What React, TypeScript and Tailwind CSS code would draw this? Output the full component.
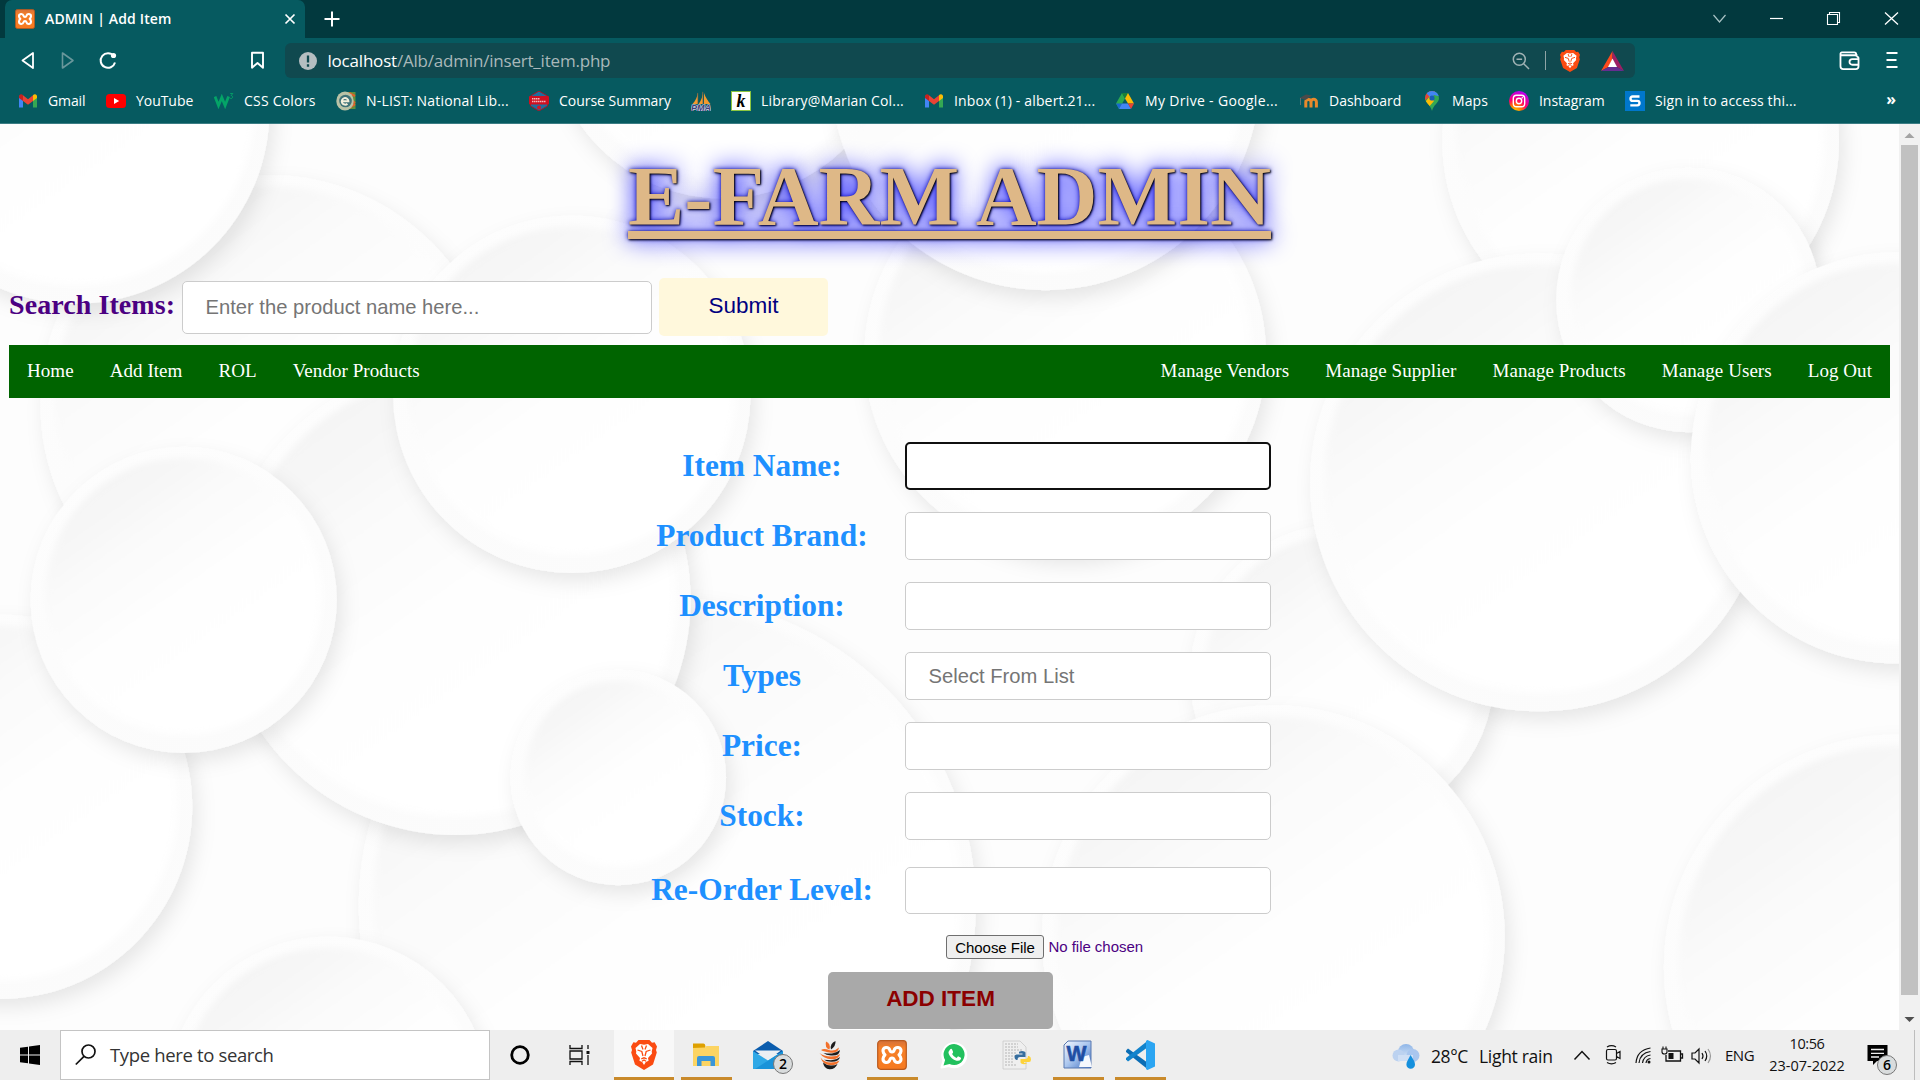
import React from "react";

/* ---------- page backdrop ---------- */

type Disc = [number, number, number];

const discs: Disc[] = [
  [545, 740, 252],
  [220, 330, 187],
  [372, 490, 192],
  [62, 90, 158],
  [590, 20, 142],
  [870, 290, 164],
  [467, 322, 146],
  [854, 62, 175],
  [0, 659, 157],
  [150, 490, 125],
  [505, 635, 88],
  [268, 897, 132],
  [1096, 552, 124],
  [1040, 765, 189],
  [1340, 115, 162],
  [1257, 394, 187],
  [1379, 245, 108],
  [1549, 374, 168],
  [1549, 790, 190],
];

function Backdrop() {
  return (
    <svg className="absolute inset-0 h-full w-full" viewBox="0 101.3 1551 740" preserveAspectRatio="none">
      <defs>
        <linearGradient id="face" x1="0.15" y1="0.05" x2="0.75" y2="0.9">
          <stop offset="0" stopColor="#f3f3f3" />
          <stop offset="0.35" stopColor="#fbfbfb" />
          <stop offset="0.55" stopColor="#fefefe" />
          <stop offset="1" stopColor="#ffffff" />
        </linearGradient>
        <linearGradient id="rim" x1="0.2" y1="0" x2="0.7" y2="1">
          <stop offset="0" stopColor="#fdfdfd" />
          <stop offset="1" stopColor="#fbfbfb" />
        </linearGradient>
        <filter id="drop" x="-20%" y="-20%" width="140%" height="140%">
          <feDropShadow dx="4" dy="7" stdDeviation="8" floodColor="#000" floodOpacity="0.09" />
        </filter>
        <filter id="soft" x="-5%" y="-5%" width="110%" height="110%">
          <feGaussianBlur stdDeviation="2.5" />
        </filter>
      </defs>
      <rect x="0" y="100" width="1551" height="745" fill="#fdfdfd" />
      {discs.map(([x, y, r]) => (
        <g key={`${x}-${y}`}>
          <circle cx={x} cy={y} r={r} fill="url(#rim)" filter="url(#drop)" />
          <circle cx={x} cy={y - 3} r={r - 12} fill="url(#face)" filter="url(#soft)" />
        </g>
      ))}
    </svg>
  );
}

/* ---------- icons ---------- */

function XamppTile({ size }: { size: number }) {
  return (
    <svg width={size} height={size} viewBox="0 0 30 30">
      <defs>
        <linearGradient id="xa" x1="0" y1="0" x2="0" y2="1">
          <stop offset="0" stopColor="#d4713a" />
          <stop offset="0.25" stopColor="#f5802a" />
          <stop offset="1" stopColor="#f77a1f" />
        </linearGradient>
      </defs>
      <rect x="0.7" y="0.7" width="28.6" height="28.6" rx="3" fill="url(#xa)" stroke="#b9591d" strokeWidth="1.2" />
      <path
        d="M15 12q-1.700 0-2.200-1.900Q12 7.300 9 7.500 5.800 8 6 11q.2 2.200 2 3.800-1.800 1.700-2 4-.1 3.200 3 3.700 3 .2 3.800-2.600.5-1.900 2.200-1.900t2.200 1.900q.8 2.800 3.800 2.600 3.100-.5 3-3.700-.2-2.300-2-4 1.800-1.600 2-3.800.2-3-3-3.500-3-.2-3.800 2.600Q16.700 12 15 12z"
        fill="none"
        stroke="#fff"
        strokeWidth="3.100"
        strokeLinejoin="round"
      />
    </svg>
  );
}

const GmailIcon = () => (
  <svg width="20" height="20" viewBox="0 0 20 20">
    <path d="M1 4.500V16.500h4V8z" fill="#4285f4" />
    <path d="M19 4.500V16.500h-4V8z" fill="#34a853" />
    <path d="M1 5.200a2 2 0 0 1 3.200-1.600L5 4.300V10L1 7z" fill="#c5221f" />
    <path d="M19 5.200a2 2 0 0 0-3.200-1.600L15 4.300V10l4-3z" fill="#fbbc04" />
    <path d="M5 4.300l5 3.900 5-3.900V10l-5 3.800L5 10z" fill="#ea4335" />
  </svg>
);

const YouTubeIcon = () => (
  <svg width="20" height="20" viewBox="0 0 20 20">
    <rect y="3" width="20" height="14" rx="3.500" fill="#f00" />
    <path d="M8 7v6l5.200-3z" fill="#fff" />
  </svg>
);

const W3Icon = () => (
  <svg width="20" height="20" viewBox="0 0 20 20">
    <path d="M1 5.500l3.500 9 3.300-8 3.300 8 3.500-9" fill="none" stroke="#04a467" strokeWidth="2.800" />
    <path d="M16.200 2.500h2.600l-1.600 2a1.500 1.500 0 1 1-1.300 2.400" fill="none" stroke="#04a467" strokeWidth="0.900" />
  </svg>
);

const NListIcon = () => (
  <svg width="20" height="20" viewBox="0 0 20 20">
    <rect x="11" y="1" width="8.500" height="17" fill="#5f8f3c" />
    <path d="M13 2l6 3M14 8l5 4M13 17l6-4" stroke="#e0602a" strokeWidth="2.200" />
    <ellipse cx="9" cy="10" rx="8.700" ry="9.500" fill="#b9c2a6" />
    <circle cx="9.500" cy="10" r="6.300" fill="#3f7278" />
    <path d="M6 10.300h6.400a3.300 3.300 0 1 0-1 2.400" fill="none" stroke="#f3efdc" strokeWidth="2" />
  </svg>
);

const AcademyIcon = () => (
  <svg width="20" height="20" viewBox="0 0 20 20">
    <path d="M10 0l8.500 5v10L10 20l-8.500-5V5z" fill="#1d6f9f" stroke="#a81622" strokeWidth="1" />
    <rect x="0" y="5" width="20" height="8.500" rx="1" fill="#cf1020" />
    <path d="M3 7.800h8M3 10.500h14" stroke="#f2b9bd" strokeWidth="1.400" strokeDasharray="1.500 0.500" />
    <circle cx="10" cy="16.500" r="2" fill="#d31525" />
  </svg>
);

const PmaIcon = () => (
  <svg width="20" height="20" viewBox="0 0 20 20">
    <path d="M7 1.500V13H1.500C4.500 10 6.300 6 7 1.500zM12 0v13H7.700C10.500 9 11.700 5 12 0zM13 2c1.500 4.500 4 8 6.500 11H13z" fill="#f29a2e" />
    <path d="M6.700 2v11M11.800 1v12" stroke="#8a6b4b" strokeWidth="0.700" />
    <text x="0" y="19.500" textLength="20" lengthAdjust="spacingAndGlyphs" fontSize="8.500" fontWeight="700" fontStyle="italic" fontFamily="Liberation Sans, sans-serif" fill="#3e3f78" stroke="#d5d6e8" strokeWidth="1.200" paintOrder="stroke">PMA</text>
  </svg>
);

const KohaIcon = () => (
  <span className="flex h-5 w-5 items-center justify-center border-[1.500px] border-[#8cc63f] bg-white font-['Liberation_Serif',serif] text-[18px] leading-none font-bold text-black italic">
    k
  </span>
);

const DriveIcon = () => (
  <svg width="20" height="20" viewBox="0 0 20 20">
    <path d="M7 2L1 12.500 4 18 10 7.400z" fill="#2da94f" />
    <path d="M7 2h6l-3 5.400z" fill="#188038" />
    <path d="M13 2l6 10.500h-6L10 7.400z" fill="#fbbc04" />
    <path d="M1 12.500h6L4 18z" fill="#1967d2" />
    <path d="M7 12.500h6L16 18H4z" fill="#4285f4" />
    <path d="M13 12.500h6L16 18z" fill="#ea4335" />
  </svg>
);

const MoodleIcon = () => (
  <svg width="20" height="20" viewBox="0 0 20 20">
    <path d="M6.800 16.500v-5.500a2.500 2.500 0 0 1 5.200 0v5.500m0-5.500a2.500 2.500 0 0 1 5.400 0v5.500" fill="none" stroke="#e8892b" strokeWidth="3" />
    <path d="M0.500 7L7 3.500l6 1L6.500 9z" fill="#4a4a4a" />
    <path d="M1.500 7v7" stroke="#777" strokeWidth="0.800" />
  </svg>
);

const MapsIcon = () => (
  <svg width="20" height="20" viewBox="0 0 20 20">
    <defs>
      <clipPath id="pin">
        <path d="M10 0a7 7 0 0 1 7 7c0 5-5.500 6.500-7 13C8.500 13.500 3 12 3 7a7 7 0 0 1 7-7z" />
      </clipPath>
    </defs>
    <g clipPath="url(#pin)">
      <rect width="20" height="20" fill="#34a853" />
      <path d="M0 12L14 0H0z" fill="#ea4335" />
      <path d="M5 0h15v6L12 4 9 7 5 3z" fill="#4285f4" />
      <path d="M2 12.500L8 5l4 5-6 7z" fill="#fbbc04" />
    </g>
    <circle cx="10" cy="7" r="2.600" fill="#1a5fb4" />
  </svg>
);

const InstagramIcon = () => (
  <svg width="20" height="20" viewBox="0 0 20 20">
    <defs>
      <radialGradient id="ig" cx="0.3" cy="1.05" r="1.100">
        <stop offset="0" stopColor="#ffd600" />
        <stop offset="0.3" stopColor="#ff7a00" />
        <stop offset="0.550" stopColor="#ff0169" />
        <stop offset="1" stopColor="#b400ff" />
      </radialGradient>
    </defs>
    <circle cx="10" cy="10" r="10" fill="url(#ig)" />
    <rect x="4.300" y="4.300" width="11.400" height="11.400" rx="3.300" fill="none" stroke="#fff" strokeWidth="1.400" />
    <circle cx="10" cy="10" r="2.700" fill="none" stroke="#fff" strokeWidth="1.400" />
    <circle cx="13.300" cy="6.800" r="0.800" fill="#fff" />
  </svg>
);

const SIcon = () => (
  <svg width="20" height="20" viewBox="0 0 20 20">
    <rect width="20" height="20" fill="#0077cc" />
    <path d="M14.500 5.500H7.700Q5.500 5.500 5.500 7.700T7.700 9.900h4.600q2.200 0 2.200 2.200t-2.200 2.300H5.300" fill="none" stroke="#fff" strokeWidth="2.400" />
  </svg>
);

function BraveLion({ className }: { className: string }) {
  return (
    <svg className={className} viewBox="0 0 26 30" preserveAspectRatio="none">
      <path d="M7.500 0h11l2.500 2.700 2.600-.4L26 6.500 25 10l.8 2.500-3.800 12L13 30 4 24.500.2 12.500 1 10 0 6.500l2.400-4.200 2.600.4z" fill="#fb4b12" />
      <path
        d="M13 4.800l4-.8 4.500 4-.8 3.500.3 2-4 4.500.6 2.700-2.800 1.300L13 25l-1.800-3-2.800-1.300.6-2.700-4-4.500.3-2L4.500 8 9 4z"
        fill="#fff"
      />
      <path
        d="M6.500 10l4.300 1.500L12 16M19.500 10l-4.300 1.500L14 16M10.500 5.500l1.500 4M15.500 5.500l-1.500 4M10.300 18.800l2.700-1 2.700 1M11 21.200l2-1.200 2 1.200"
        fill="none"
        stroke="#fb4b12"
        strokeWidth="1.300"
      />
    </svg>
  );
}

/* ---------- browser chrome ---------- */

const bookmarks: { width: string; label: string; track: string; icon: React.ReactNode }[] = [
  { width: "w-[88px]", label: "Gmail", track: "tracking-[-0.1px]", icon: <GmailIcon /> },
  { width: "w-[108px]", label: "YouTube", track: "tracking-[-0.05px]", icon: <YouTubeIcon /> },
  { width: "w-[122px]", label: "CSS Colors", track: "tracking-[0.22px]", icon: <W3Icon /> },
  { width: "w-[193px]", label: "N-LIST: National Lib...", track: "tracking-[0.2px]", icon: <NListIcon /> },
  { width: "w-[162px]", label: "Course Summary", track: "tracking-[-0.03px]", icon: <AcademyIcon /> },
  { width: "w-[40px]", label: "", track: "", icon: <PmaIcon /> },
  { width: "w-[193px]", label: "Library@Marian Col...", track: "tracking-[0.15px]", icon: <KohaIcon /> },
  { width: "w-[191px]", label: "Inbox (1) - albert.21...", track: "tracking-[0.15px]", icon: <GmailIcon /> },
  { width: "w-[184px]", label: "My Drive - Google...", track: "tracking-[0.33px]", icon: <DriveIcon /> },
  { width: "w-[123px]", label: "Dashboard", track: "tracking-[0px]", icon: <MoodleIcon /> },
  { width: "w-[87px]", label: "Maps", track: "tracking-[0.1px]", icon: <MapsIcon /> },
  { width: "w-[116px]", label: "Instagram", track: "tracking-[-0.05px]", icon: <InstagramIcon /> },
  { width: "w-[180px]", label: "Sign in to access thi...", track: "tracking-[0.15px]", icon: <SIcon /> },
];

function BrowserChrome() {
  return (
    <header className="flex h-[124px] shrink-0 flex-col border-b border-[#3b7d84] bg-[#065a60] text-white">
      <div className="flex h-[38px] items-stretch bg-[#02393e]">
        <div className="ml-[5px] flex w-[300px] items-center rounded-t-[7px] bg-[#065a60] pl-[10px]">
          <XamppTile size={20} />
          <span className="ml-[10px] grow pb-[1px] text-[14px] font-semibold tracking-[0.15px] whitespace-nowrap">ADMIN | Add Item</span>
          <svg className="mr-[9px]" width="12" height="12" viewBox="0 0 12 12">
            <path d="M1.500 1.500l9 9m0-9l-9 9" stroke="#fff" strokeWidth="1.700" />
          </svg>
        </div>
        <svg className="mt-[11px] ml-[19px]" width="16" height="16" viewBox="0 0 16 16">
          <path d="M8 0.500v15M0.500 8h15" stroke="#fff" strokeWidth="2" />
        </svg>
        <div className="grow" />
        <svg className="mt-[10px]" width="220" height="18" viewBox="0 0 220 18">
          <path d="M13.500 5l6 7 6-7" fill="none" stroke="#a9c3c5" strokeWidth="1.200" />
          <path d="M70 8.500h13" stroke="#fff" strokeWidth="1.200" />
          <path d="M127.500 4.500h10v10h-10zM129.500 4.500v-2h10v10h-2" fill="none" stroke="#fff" strokeWidth="1.100" />
          <path d="M185 2.500l13 12m0-12l-13 12" stroke="#fff" strokeWidth="1.300" />
        </svg>
      </div>
      <div className="flex h-[45px] shrink-0 items-center">
        <svg width="285" height="45" viewBox="0 0 285 45" fill="none">
          <path d="M33 15v15L22.500 22.500z" stroke="#fff" strokeWidth="1.800" strokeLinejoin="round" />
          <path d="M62.500 15v15L73 22.500z" stroke="#69979b" strokeWidth="1.600" strokeLinejoin="round" />
          <path d="M113.700 18a7.300 7.300 0 1 0 1.300 6.500" stroke="#fff" strokeWidth="2" />
          <circle cx="113.500" cy="17.500" r="2.600" fill="#fff" />
          <path d="M252 14.700h11v15l-5.500-4.700-5.500 4.700z" stroke="#fff" strokeWidth="1.900" strokeLinejoin="round" />
        </svg>
        <div className="flex h-[35px] w-[1350px] items-center rounded-[6px] bg-[#10494f]">
          <svg className="ml-[13.500px]" width="18" height="18" viewBox="0 0 18 18">
            <circle cx="9" cy="9" r="9" fill="#b5bec1" />
            <path d="M9 3.500v7M9 12.300v2.400" stroke="#10494f" strokeWidth="2.300" />
          </svg>
          <span className="ml-[11px] grow text-[17px] tracking-[-0.2px] whitespace-nowrap text-[#a9b8ba]">
            <span className="text-white">localhost</span>/Alb/admin/insert_item.php
          </span>
          <svg className="mr-[15px]" width="18" height="18" viewBox="0 0 18 18" fill="none" stroke="#9fb2b4" strokeWidth="1.500">
            <circle cx="7.300" cy="7.300" r="6" />
            <path d="M4.500 7.300h5.600M11.700 11.700l5.300 5.300" />
          </svg>
          <span className="h-[19px] w-px bg-[#8fa4a6]" />
          <BraveLion className="ml-[14px] h-[22px] w-[20px]" />
          <svg className="mr-[11px] ml-[21px]" width="23" height="20" viewBox="0 0 23 20">
            <path d="M11.500 0L0 20l7.500-4 4-8z" fill="#ff4a1d" />
            <path d="M11.500 0L23 20l-7.500-4-4-8z" fill="#9e1f63" />
            <path d="M0 20h23l-7.500-4h-8z" fill="#662d91" />
            <path d="M11.500 7.500L16 16H7z" fill="#fff" />
          </svg>
        </div>
        <div className="grow" />
        <svg className="mr-[26px]" width="21" height="19" viewBox="0 0 21 20" fill="none" stroke="#fff" strokeWidth="1.900">
          <path d="M18 6V4.500H2.500A1.500 1.500 0 0 1 2.500 1.500H15.500a2 2 0 0 1 2 2M1 3v13a3 3 0 0 0 3 3h13a3 3 0 0 0 3-3V8a2 2 0 0 0-2-2" />
          <path d="M20 8.500h-6.500a2.700 2.700 0 0 0 0 6H20" />
        </svg>
        <svg className="mr-[22px] mb-[1px]" width="12" height="18" viewBox="0 0 12 18">
          <path d="M0.500 2h11M0.500 9h10M0.500 16h11" stroke="#fff" strokeWidth="2" />
        </svg>
      </div>
      <nav className="flex h-[36px] items-center pl-[18px] text-[14px]">
        {bookmarks.map((b, i) => (
          <div key={i} className={`flex shrink-0 items-center gap-[10px] ${b.width}`}>
            <span className="shrink-0">{b.icon}</span>
            {b.label && <span className={`pb-[2px] whitespace-nowrap ${b.track}`}>{b.label}</span>}
          </div>
        ))}
        <span className="ml-auto pr-[24px] pb-[5px] text-[16px] font-bold">»</span>
      </nav>
    </header>
  );
}

/* ---------- web page ---------- */

const leftLinks = ["Home", "Add Item", "ROL", "Vendor Products"];
const rightLinks = ["Manage Vendors", "Manage Supplier", "Manage Products", "Manage Users", "Log Out"];
const fields = [
  { label: "Item Name:", hint: "", box: "h-12 border-2 border-[#101010]", gap: "mb-[22px]", lead: "leading-[46px]" },
  { label: "Product Brand:", hint: "", box: "h-12 border border-[#ccc]", gap: "mb-[22px]", lead: "leading-[46px]" },
  { label: "Description:", hint: "", box: "h-12 border border-[#ccc]", gap: "mb-[22px]", lead: "leading-[46px]" },
  { label: "Types", hint: "Select From List", box: "h-12 border border-[#ccc]", gap: "mb-[22px]", lead: "leading-[46px]" },
  { label: "Price:", hint: "", box: "h-12 border border-[#ccc]", gap: "mb-[22px]", lead: "leading-[46px]" },
  { label: "Stock:", hint: "", box: "h-12 border border-[#ccc]", gap: "mb-[27px]", lead: "leading-[46px]" },
  { label: "Re-Order Level:", hint: "", box: "h-[47px] border border-[#ccc]", gap: "mb-[21px]", lead: "leading-[44px] pb-[2px]" },
];

function NavLinks({ links }: { links: string[] }) {
  return (
    <div className="flex">
      {links.map((l) => (
        <a key={l} className="px-[18px]">
          {l}
        </a>
      ))}
    </div>
  );
}

function Page() {
  return (
    <main className="relative flex grow overflow-hidden bg-white">
      <div className="relative h-full w-[1899px] overflow-hidden">
        <Backdrop />
        <div className="relative flex h-full flex-col font-['Liberation_Serif',serif]">
          <h1 className="h-[154px] pt-[25px] text-center text-[84.400px] leading-[96px] font-bold text-[#deb887] underline decoration-[8px] underline-offset-[6px] [text-decoration-skip-ink:none] [text-shadow:1px_1px_2px_black,0_0_25px_blue,0_0_5px_darkblue]">
            E-FARM ADMIN
          </h1>
          <div className="flex h-[58px] pl-[9px]">
            <label className="w-[173px] text-[28px] leading-[54px] font-bold tracking-[0.07px] whitespace-nowrap text-[#4b0082]">Search Items:</label>
            <div className="mt-[3px] h-[53px] w-[470px] rounded-[5px] border border-[#ccc] bg-white pl-[22.500px] font-['Liberation_Sans',sans-serif] text-[20.200px] leading-[51px] text-[#757575]">
              Enter the product name here...
            </div>
            <div className="ml-[7px] h-[58px] w-[169px] rounded-[5px] bg-[#fff8dc] text-center font-['Liberation_Sans',sans-serif] text-[22.500px] leading-[56px] text-[#000080]">
              Submit
            </div>
          </div>
          <nav className="mt-[9px] mr-[9px] ml-[9px] flex h-[53px] shrink-0 justify-between bg-[#006400] text-[19px] leading-[52px] tracking-[0.06px] text-white">
            <NavLinks links={leftLinks} />
            <NavLinks links={rightLinks} />
          </nav>
          <form className="mt-[44px] flex flex-col">
            {fields.map((f) => (
              <div key={f.label} className={`flex items-center ${f.gap}`}>
                <label className={`ml-[640px] w-[265px] pr-[21px] text-center text-[31.400px] font-bold text-[#1e90ff] ${f.lead}`}>{f.label}</label>
                <div className={`flex w-[366px] items-center rounded-[5px] bg-white pl-[22.500px] font-['Liberation_Sans',sans-serif] text-[20.200px] text-[#757575] ${f.box}`}>
                  {f.hint}
                </div>
              </div>
            ))}
            <div className="ml-[946px] flex h-[24px] font-['Liberation_Sans',sans-serif] text-[15px]">
              <span className="h-[24px] w-[98px] rounded-[3px] border border-[#6f6f6f] bg-[#efefef] text-center leading-[23px] tracking-[-0.04px] whitespace-nowrap text-black">
                Choose File
              </span>
              <span className="ml-[4.500px] leading-[23px] tracking-[-0.04px] text-[#4b0082]">No file chosen</span>
            </div>
            <div className="mt-[13px] ml-[828px] h-[57px] w-[225px] rounded-[5px] bg-[#a9a9a9] text-center font-['Liberation_Sans',sans-serif] text-[22.500px] leading-[54px] font-bold text-[#8b0000]">
              ADD ITEM
            </div>
          </form>
        </div>
      </div>
      <div className="flex w-[21px] flex-col items-center bg-[#f1f1f1]">
        <svg className="mt-[9px] mb-[7px]" width="11" height="5" viewBox="0 0 11 5">
          <path d="M5.500 0l5 5h-10z" fill="#a3a3a3" />
        </svg>
        <div className="h-[850px] w-[17px] bg-[#c1c1c1]" />
        <svg className="mt-[22px]" width="11" height="5" viewBox="0 0 11 5">
          <path d="M5.500 5l5-5h-10z" fill="#505050" />
        </svg>
      </div>
    </main>
  );
}

/* ---------- taskbar ---------- */

function Badge({ n, place }: { n: string; place: string }) {
  return (
    <span className={`absolute flex h-5 w-5 items-center justify-center rounded-full border border-[#777] bg-[#d9dcdd] text-[14px] leading-none font-semibold text-black ${place}`}>
      {n}
    </span>
  );
}

const FolderIcon = () => (
  <svg width="28" height="30" viewBox="0 0 28 30">
    <path d="M1 4h11l2 2.500H1z" fill="#dea514" />
    <path d="M1 3.500h10.500q1.500 0 1.500 1.500v3H1z" fill="#dea000" />
    <path d="M1 8l12-.5L14.500 6H27v20H1z" fill="#fcd462" />
    <path d="M5 26V18q0-2 2-2h14q2 0 2 2v8h-4.500v-5h-9v5z" fill="#3a96d8" />
  </svg>
);

const MailIcon = () => (
  <svg width="30" height="30" viewBox="0 0 30 30">
    <path d="M0 11L15 1l15 10v3H0z" fill="#0a5cad" />
    <path d="M2 10.500h26L15 20z" fill="#eceff3" />
    <path d="M0 11l15 9.500L30 11v18H0z" fill="#2fa8e6" />
    <path d="M30 11v18H2z" fill="#1a93d9" />
  </svg>
);

const BeeIcon = () => (
  <svg width="24" height="30" viewBox="0 0 24 30" fill="none">
    <path d="M8 1.500q5 2 3.500 8-5-1.500-3.500-8z" fill="#f2702a" />
    <path d="M17.500 1q.5 5-4.500 8.500q-1.500-6 4.500-8.500z" fill="#1c1c1c" />
    <path d="M3 10q3-2 8 0t10-2.500q-1 6-8 5.200T3 10z" fill="#f2702a" />
    <path d="M21.800 10q.5 6-8.800 5.500-5-.5-7.500-2.500 6.500.9 9.500.3 4-.8 6.800-3.300z" fill="#1c1c1c" />
    <path d="M1.500 13q4 3.300 11.500 3.500 6 0 9-2.500-1 5.500-8.500 5.300T1.500 13z" fill="#f2702a" />
    <path d="M22 17q-1 5-9 4.700-4.500-.2-7-2 5.500.6 8.500.4 4.500-.4 7.500-3.100z" fill="#1c1c1c" />
    <path d="M2.500 17.500q3.500 5 10.500 5 5 0 8.500-2-2 4.800-8.500 4.800-8 0-10.500-7.800z" fill="#f2702a" />
    <path d="M5 22.500q3.500 3 8 3 4 0 6.500-1.500-2.500 5.500-8 5.300T5 22.500z" fill="#1c1c1c" />
  </svg>
);

const PythonFileIcon = () => (
  <svg width="30" height="30" viewBox="0 0 30 30">
    <path d="M2 1h17l6 6v22H2z" fill="#efefef" stroke="#c9c9c9" strokeWidth="0.800" />
    <path d="M4 4h13M4 7h13M4 10h18M4 13h12M4 16h10M4 19h9M4 22h9M4 25h12" stroke="#b5b5b5" strokeWidth="1.200" strokeDasharray="2 1" />
    <path d="M18 12.500q0-1.500 3-1.500t3.500 1.500V17h-5.500q-2.500 0-2.500 3h-1q-2-.5-2-3t2-2.500h6v-1H18z" fill="#366e9f" />
    <path d="M26 22.500q0 1.700-3 1.700t-3.500-1.700V19h5.500q2-.5 2-3h1q2 .5 2 3.500 0 2.500-2 2.500h-5v.8h3z" fill="#fdd33b" />
  </svg>
);

const WordIcon = () => (
  <svg width="30" height="30" viewBox="0 0 30 30">
    <defs>
      <linearGradient id="wd" x1="0" y1="0" x2="1" y2="1">
        <stop offset="0" stopColor="#f5f9ff" />
        <stop offset="0.500" stopColor="#a9c5ee" />
        <stop offset="1" stopColor="#3f6fc0" />
      </linearGradient>
    </defs>
    <path d="M5 1h23v27H1V5z" fill="url(#wd)" stroke="#5878b0" />
    <path d="M19 17l7-2 3 12H16z" fill="#f5f8fd" />
    <text x="3.500" y="20.500" textLength="20" lengthAdjust="spacingAndGlyphs" fontFamily="Liberation Sans, sans-serif" fontWeight="700" fontSize="22" fill="#1f4ea3" stroke="#1f4ea3" strokeWidth="0.600">W</text>
  </svg>
);

const CodeIcon = () => (
  <svg width="31" height="30" viewBox="0 0 31 30">
    <path d="M1 10.500l2-2L23 23v6.500L1 12z" fill="#0b6db5" />
    <path d="M1 19.500l2 2L23 7V0.500L1 18z" fill="#1283cc" />
    <path d="M22.500 0L30 3.500v23L22.500 30q-1-.3-1.500-1V1q.5-.700 1.500-1z" fill="#2ba5f2" />
  </svg>
);

const WhatsIcon = () => (
  <svg width="28" height="28" viewBox="0 0 28 28">
    <path d="M1.500 26.500l2-7A12 12 0 1 1 9 25z" fill="#fff" stroke="#fff" strokeWidth="2" strokeLinejoin="round" />
    <path d="M3.500 24.500l1.600-5.500A10.500 10.500 0 1 1 9.500 23z" fill="#22c15e" />
    <path d="M10 8.500q1.500-1.500 2.300.5l.8 2q.2.700-1 2 1.300 2.600 4.300 4 .5-.2 1.600-1.800l2.600 1.200q.9.500.2 1.800-1.300 2.200-4.300 1.500-5.500-1.500-7.700-6.700-.7-2.700 1.200-4.500z" fill="#fff" />
  </svg>
);

const apps: { icon: React.ReactNode; bar: string; tile: string; badge?: string }[] = [
  { icon: <BraveLion className="h-[30px] w-[26px]" />, bar: "w-[60px] bg-[#c98a2b]", tile: "bg-[#f8f8f8]" },
  { icon: <FolderIcon />, bar: "w-[51px] bg-[#c98a2b]", tile: "" },
  { icon: <MailIcon />, bar: "", tile: "", badge: "2" },
  { icon: <BeeIcon />, bar: "", tile: "" },
  { icon: <XamppTile size={30} />, bar: "w-[51px] bg-[#c98a2b]", tile: "" },
  { icon: <WhatsIcon />, bar: "", tile: "" },
  { icon: <PythonFileIcon />, bar: "", tile: "" },
  { icon: <WordIcon />, bar: "w-[51px] bg-[#c98a2b]", tile: "" },
  { icon: <CodeIcon />, bar: "w-[51px] bg-[#c98a2b]", tile: "" },
];

function Taskbar() {
  return (
    <footer className="flex h-[50px] shrink-0 bg-[#eeeeee] text-[#111]">
      <svg className="mt-[15px] ml-[20px]" width="20" height="20" viewBox="0 0 20 20">
        <path d="M0 2.800L8 1.700V9.500H0zM9 1.500L20 0v9.500H9zM0 10.500h8v7.800L0 17.200zM9 10.500h11V20L9 18.500z" fill="#000" />
      </svg>
      <div className="ml-[20px] flex w-[430px] items-center border border-[#c4c4c4] bg-white">
        <svg className="ml-[14px]" width="21" height="22" viewBox="0 0 21 22" fill="none" stroke="#111" strokeWidth="1.700">
          <circle cx="13.500" cy="7.500" r="6.500" />
          <path d="M9 12.300L0.800 20.500" />
        </svg>
        <span className="ml-[14px] text-[18.500px] tracking-[-0.35px] text-[#333]">Type here to search</span>
      </div>
      <svg className="mt-[15px] ml-[20px]" width="20" height="20" viewBox="0 0 20 20">
        <circle cx="10" cy="10" r="8.300" fill="none" stroke="#000" strokeWidth="2.800" />
      </svg>
      <svg className="mt-[15px] ml-[39px]" width="21" height="20" viewBox="0 0 21 20" fill="none" stroke="#111" strokeWidth="1.300">
        <path d="M1 0v3.500h12V0M1 20v-3.500h12V20M1 6h12v8H1zM19 0v4M19 10v10" />
        <path d="M17.500 7.500h3" strokeWidth="3" />
      </svg>
      <div className="ml-[23px] flex">
        {apps.map((a, i) => (
          <div key={i} className="relative flex w-[62px] items-center justify-center">
            <div className={`flex h-full w-[60px] flex-col items-center ${a.tile}`}>
              <div className="flex h-[47px] items-center pt-[2px]">{a.icon}</div>
              <div className={`h-[3px] ${a.bar}`} />
            </div>
            {a.badge && <Badge n={a.badge} place="top-[24px] left-[36px]" />}
          </div>
        ))}
      </div>
      <div className="grow" />
      <svg className="mt-[13px]" width="28" height="27" viewBox="0 0 28 27">
        <defs>
          <linearGradient id="cl" x1="0" y1="0" x2="0" y2="1">
            <stop offset="0" stopColor="#8fb6e8" />
            <stop offset="1" stopColor="#dfeaf8" />
          </linearGradient>
        </defs>
        <circle cx="14" cy="9" r="8" fill="url(#cl)" />
        <circle cx="6.500" cy="12.500" r="6" fill="#bcd2f0" />
        <circle cx="21" cy="12.500" r="6.500" fill="#a9c6ee" />
        <path d="M6 12h15v6H6z" fill="#cfdff5" />
        <path d="M18.500 12c2.500 4 4.500 6.500 4.500 9.500a4.300 4.300 0 0 1-8.600 0c0-3 2.300-5.500 4.100-9.500z" fill="#1590dd" />
      </svg>
      <span className="ml-[11px] w-[48px] text-[17.500px] leading-[52px] tracking-[-0.4px] whitespace-nowrap">28°C</span>
      <span className="w-[93px] text-[17.500px] leading-[52px] tracking-[-0.3px] whitespace-nowrap">Light rain</span>
      <svg className="mt-[14px]" width="142" height="24" viewBox="0 0 142 24" fill="none" stroke="#111" strokeWidth="1.500">
        <path d="M2.500 15.500l7.500-8 7.500 8" />
        <path d="M36 5.500h7q1.500 0 1.500 1.500v7.500q0 1.500-1.500 1.500h-7q-1.500 0-1.500-1.500V7q0-1.500 1.500-1.500zM44.500 9.500l3.500-2v7l-3.500-2M35 3q4.500-2.700 9 0M35 18.500q4.500 2.700 9 0" strokeWidth="1.200" />
        <path d="M64 19q1-13 14.500-15M67 19q1-10 11.500-11.500M70.500 19q1-7 8-8M74 19q.5-4 4.500-4.500" strokeWidth="1.200" />
        <circle cx="77" cy="18" r="1.500" fill="#111" stroke="none" />
        <path d="M96 7h12.500v10H94v-6M108.500 10h2v4h-2" strokeWidth="1.300" />
        <rect x="96.500" y="9" width="5" height="6" fill="#111" stroke="none" />
        <path d="M90 5h5v3q0 2-2.500 2T90 8zM91 5V2.500M94 5V2.500" strokeWidth="1.100" />
        <path d="M120 9h3l4-4v14l-4-4h-3zM130 9q2 3 0 6M133 7q3.500 5 0 10" strokeWidth="1.200" />
        <path d="M136 5q5 7 0 14" stroke="#999" strokeWidth="1.200" />
      </svg>
      <span className="ml-[11px] w-[42px] text-[15px] leading-[51px] tracking-[-0.5px]">ENG</span>
      <div className="flex w-[80px] flex-col items-center pt-[2px] text-[14.500px] leading-[23px] whitespace-nowrap">
        <span className="tracking-[-0.4px]">10:56</span>
        <span className="-mt-px">23-07-2022</span>
      </div>
      <div className="relative ml-[20px] w-[47px]">
        <svg className="mt-[15px]" width="21" height="22" viewBox="0 0 21 22">
          <path d="M0.500 0h20v16H10l-4 4v-4H0.500z" fill="#000" />
          <path d="M4 4.500h13M4 8.300h13M4 12h8" stroke="#eee" strokeWidth="1.300" />
        </svg>
        <Badge n="6" place="top-[25px] left-[10px]" />
      </div>
      <div className="mr-[5px] w-px bg-[#bdbdbd]" />
    </footer>
  );
}

export default function App() {
  return (
    <div className="flex h-[1080px] w-[1920px] flex-col overflow-hidden font-['Open_Sans','Noto_Sans',sans-serif]">
      <BrowserChrome />
      <Page />
      <Taskbar />
    </div>
  );
}
